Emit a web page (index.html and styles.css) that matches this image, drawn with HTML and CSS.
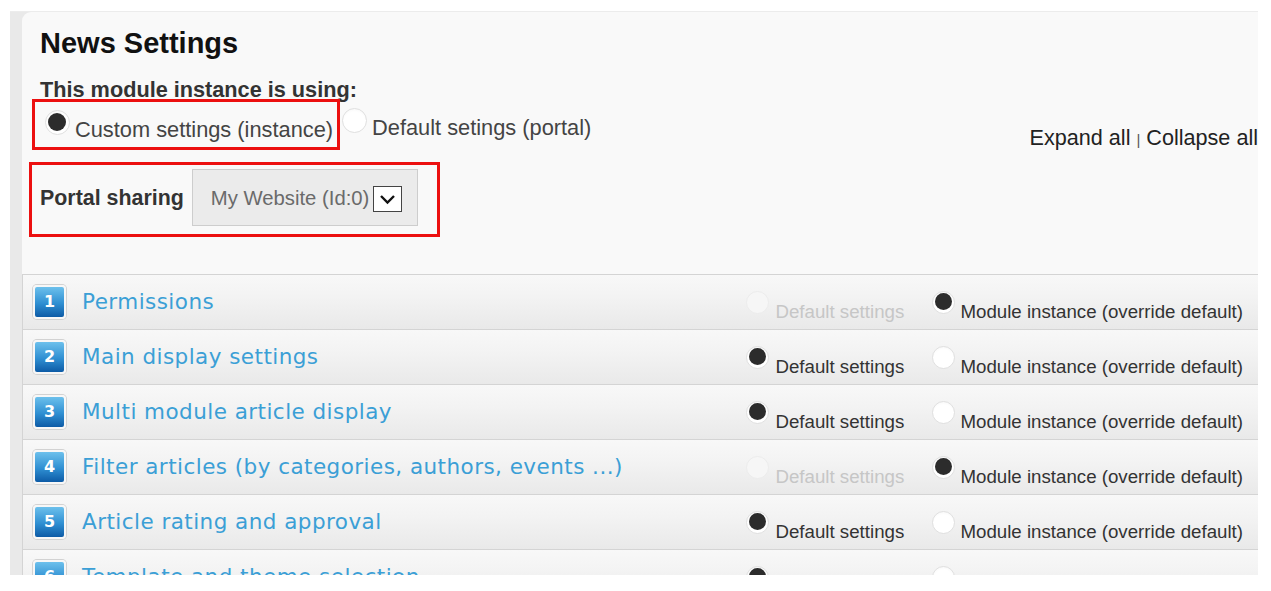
FILE: index.html
```html
<!DOCTYPE html>
<html lang="en">
<head>
    <meta charset="UTF-8">
    <meta name="viewport" content="width=device-width, initial-scale=1.0">
    <title>News Settings</title>
    <link rel="stylesheet" href="styles.css">
</head>
<body>
    <div class="frame">
        <div class="panel">
            <div class="head">
                <h1 class="title">News Settings</h1>
                <div class="using">This module instance is using:</div>

                <div class="mode-line">
                    <div class="mark mode-box">
                        <label class="mode-opt"><span class="radio big on"></span><span class="mode-text">Custom settings (instance)</span></label>
                    </div>
                    <label class="mode-opt other"><span class="radio big"></span><span class="mode-text">Default setings (portal)</span></label>
                    <div class="toggle-all"><span>Expand all</span> <span class="sep">|</span> <span>Collapse all</span></div>
                </div>

                <div class="mark share-box">
                    <span class="share-label">Portal sharing</span>
                    <div class="select">
                        <span>My Website (Id:0)</span>
                        <span class="select-btn">
                            <svg width="27" height="24" viewBox="0 0 27 24"><polyline points="7,9 13.5,15.5 20,9" fill="none" stroke="#111" stroke-width="2.4"/></svg>
                        </span>
                    </div>
                </div>
            </div>

            <div class="sections">
                <div class="section">
                    <span class="num">1</span>
                    <span class="sec-title">Permissions</span>
                    <div class="opts">
                        <label class="opt first off"><span class="radio"></span><span class="opt-text">Default settings</span></label>
                        <label class="opt"><span class="radio on"></span><span class="opt-text">Module instance (override default)</span></label>
                    </div>
                </div>
                <div class="section">
                    <span class="num">2</span>
                    <span class="sec-title">Main display settings</span>
                    <div class="opts">
                        <label class="opt first"><span class="radio on"></span><span class="opt-text">Default settings</span></label>
                        <label class="opt"><span class="radio"></span><span class="opt-text">Module instance (override default)</span></label>
                    </div>
                </div>
                <div class="section">
                    <span class="num">3</span>
                    <span class="sec-title">Multi module article display</span>
                    <div class="opts">
                        <label class="opt first"><span class="radio on"></span><span class="opt-text">Default settings</span></label>
                        <label class="opt"><span class="radio"></span><span class="opt-text">Module instance (override default)</span></label>
                    </div>
                </div>
                <div class="section">
                    <span class="num">4</span>
                    <span class="sec-title">Filter articles (by categories, authors, events ...)</span>
                    <div class="opts">
                        <label class="opt first off"><span class="radio"></span><span class="opt-text">Default settings</span></label>
                        <label class="opt"><span class="radio on"></span><span class="opt-text">Module instance (override default)</span></label>
                    </div>
                </div>
                <div class="section">
                    <span class="num">5</span>
                    <span class="sec-title">Article rating and approval</span>
                    <div class="opts">
                        <label class="opt first"><span class="radio on"></span><span class="opt-text">Default settings</span></label>
                        <label class="opt"><span class="radio"></span><span class="opt-text">Module instance (override default)</span></label>
                    </div>
                </div>
                <div class="section">
                    <span class="num">6</span>
                    <span class="sec-title">Template and theme selection</span>
                    <div class="opts">
                        <label class="opt first"><span class="radio on"></span><span class="opt-text">Default settings</span></label>
                        <label class="opt"><span class="radio"></span><span class="opt-text">Module instance (override default)</span></label>
                    </div>
                </div>
            </div>
        </div>
    </div>
</body>
</html>
```

FILE: styles.css
```css
html, body {
    margin: 0;
    padding: 0;
    background-color: #fff;
    overflow: hidden;
}

body {
    font-family: "Liberation Sans", Arial, sans-serif;
    width: 1271px;
    height: 591px;
}

.frame {
    margin: 11px 0 0 10px;
    width: 1248px;
    height: 564px;
    background-color: #e9e9e9;
    border-top: 1px solid #ececec;
    padding-left: 12px;
    box-sizing: border-box;
    overflow: hidden;
}

.panel {
    height: 100%;
    background-color: #f9f9f9;
    border-radius: 9px 0 0 0;
    overflow: hidden;
}

.head {
    padding: 17px 0 0 18px;
}

.title {
    margin: 0;
    font-size: 29px;
    line-height: 29px;
    font-weight: bold;
    color: #111;
}

.using {
    margin-top: 21px;
    font-size: 21.7px;
    line-height: 21px;
    font-weight: bold;
    color: #333;
}

/* red highlight boxes */
.mark {
    border: 3px solid #ec1010;
    box-sizing: border-box;
}

.mode-line {
    display: flex;
    align-items: flex-start;
    margin: -1px 0 0 -8px;
}

.mode-box {
    height: 51px;
    padding: 8px 4px 0 10px;
}

.mode-opt {
    display: flex;
    align-items: flex-start;
}

.mode-opt.other {
    margin-left: 2px;
    padding-top: 9px;
}

.mode-text {
    margin: 9px 0 0 5px;
    font-size: 21.8px;
    line-height: 21.8px;
    color: #444;
    white-space: nowrap;
}

.toggle-all {
    margin-left: auto;
    padding-top: 28px;
    font-size: 21.6px;
    line-height: 21.6px;
    color: #222;
    white-space: nowrap;
}

.toggle-all .sep {
    font-size: 15px;
    line-height: 1;
    color: #555;
}

.share-box {
    display: flex;
    align-items: flex-start;
    width: 411px;
    height: 75px;
    margin: 12px 0 0 -11px;
    padding: 4px 0 0 8px;
}

.share-label {
    margin-top: 19px;
    font-size: 21.4px;
    line-height: 21px;
    font-weight: bold;
    color: #333;
}

.select {
    display: flex;
    align-items: center;
    width: 226px;
    height: 57px;
    margin-left: 8px;
    padding: 2px 0 0 18px;
    background-color: #ebebeb;
    border: 1px solid #cdcdcd;
    box-sizing: border-box;
    font-size: 20.3px;
    color: #6a6a6a;
    white-space: nowrap;
}

.select-btn {
    display: flex;
    margin-left: 4px;
    background-color: #fff;
    border: 1px solid #444;
}

/* radio buttons */
.radio {
    position: relative;
    flex: none;
    width: 23px;
    height: 23px;
    border-radius: 50%;
    border: 1px solid #e0e0e0;
    background: radial-gradient(circle at 50% 60%, #fff 60%, #f1f1f1);
    box-sizing: border-box;
}

.radio.big {
    width: 25px;
    height: 25px;
}

.radio.on::after {
    content: "";
    position: absolute;
    left: 2px;
    top: 1px;
    width: 17px;
    height: 17px;
    border-radius: 50%;
    background-color: #2c2c2c;
}

.radio.big.on::after {
    width: 18px;
    height: 18px;
    left: 2px;
    top: 2px;
}

/* accordion sections */
.sections {
    margin-top: 37px;
}

.section {
    display: flex;
    align-items: center;
    height: 55px;
    border-top: 1px solid #d4d4d4;
    border-left: 1px solid #d4d4d4;
    background: linear-gradient(#f8f8f8, #f3f3f3 40%, #e9e9e9);
    box-sizing: border-box;
}

.num {
    flex: none;
    width: 29px;
    height: 30px;
    margin-left: 10px;
    border: 2px solid #f7f7f7;
    border-radius: 4px;
    box-shadow: 0 0 0 1px #d2d2d2;
    background: linear-gradient(#6cc0ec, #2f8fd2 55%, #0d5ba6);
    color: #fff;
    font-family: "DejaVu Sans", Verdana, sans-serif;
    font-weight: bold;
    font-size: 16px;
    line-height: 30px;
    text-align: center;
}

.sec-title {
    margin: 0 0 2px 16px;
    font-family: "DejaVu Sans", Verdana, sans-serif;
    font-size: 21.5px;
    letter-spacing: 0.45px;
    color: #3b9fd6;
    white-space: nowrap;
}

.opts {
    display: flex;
    align-self: stretch;
    margin-left: auto;
    padding-right: 15px;
}

.opt {
    display: flex;
    align-items: flex-start;
    padding-top: 16px;
}

.opt.first {
    width: 186px;
}

.opt-text {
    margin: 12px 0 0 5px;
    font-size: 18.7px;
    line-height: 18.7px;
    color: #333;
    white-space: nowrap;
}

.opt.first .opt-text {
    margin-left: 6px;
}

.opt.off .opt-text {
    color: #c6c6c6;
}

.opt.off .radio {
    border-color: #ececec;
    background: #f6f6f6;
}
```
